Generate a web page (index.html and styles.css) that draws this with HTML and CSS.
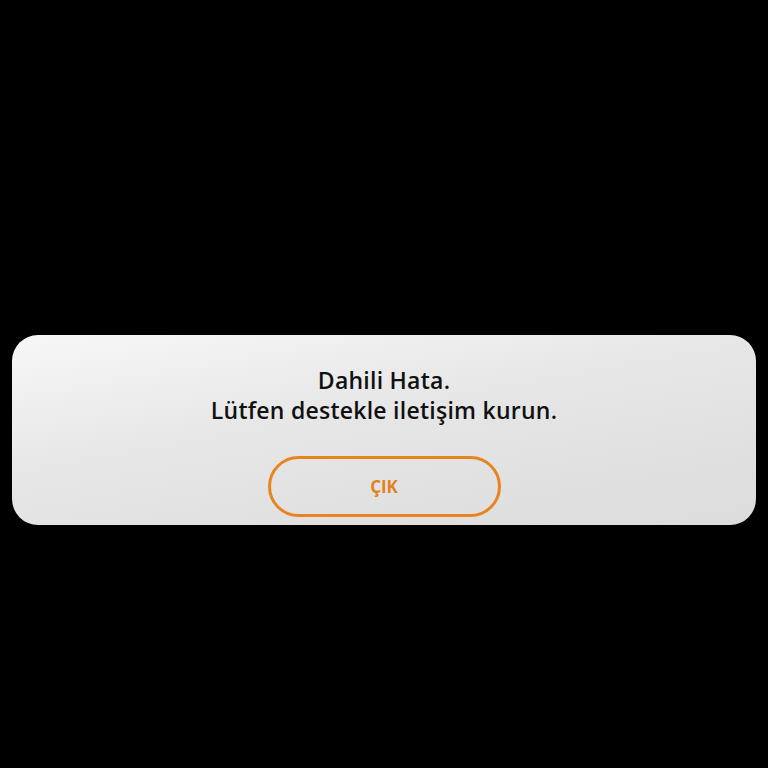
FILE: index.html
```html
<!DOCTYPE html>
<html lang="tr">
<head>
<meta charset="utf-8">
<link rel="stylesheet" href="styles.css">
</head>
<body>
<div class="screen">
  <div class="dialog">
    <p class="message">Dahili Hata.<br>Lütfen destekle iletişim kurun.</p>
    <button class="exit">ÇIK</button>
  </div>
</div>
</body>
</html>
```
FILE: styles.css
```css
html, body {
  margin: 0;
  padding: 0;
  background: #000;
  height: 100%;
}
.screen {
  padding: 335px 12px 0;
}
.dialog {
  height: 190px;
  box-sizing: border-box;
  border-radius: 26px;
  background: linear-gradient(170deg, #f7f7f7 0%, #e6e6e6 45%, #dcdcdc 100%);
  display: flex;
  flex-direction: column;
  align-items: center;
  padding-top: 30px;
}
.message {
  margin: 0;
  font-family: "Open Sans", sans-serif;
  font-weight: 600;
  font-size: 23px;
  line-height: 30px;
  letter-spacing: 0.25px;
  color: #111;
  text-align: center;
}
.exit {
  margin-top: 31px;
  width: 233px;
  height: 61px;
  box-sizing: border-box;
  border: 3px solid #e8841f;
  border-radius: 31px;
  background: transparent;
  color: #e3811f;
  font-family: "Open Sans", sans-serif;
  font-weight: 700;
  font-size: 17px;
  padding: 0;
}
```
